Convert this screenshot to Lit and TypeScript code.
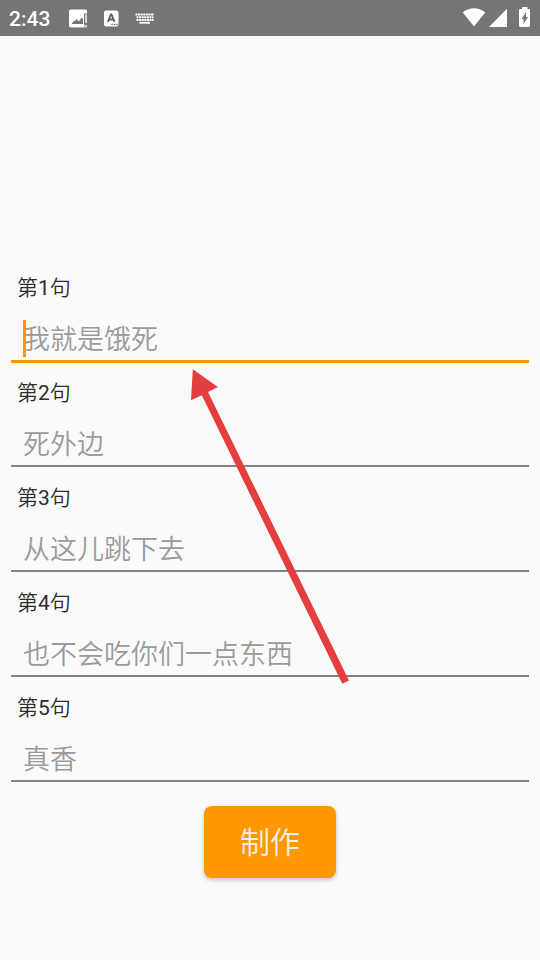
import { LitElement, html, css } from "lit";
import { customElement } from "lit/decorators.js";

@customElement("status-bar")
class StatusBar extends LitElement {
  static styles = css`
    :host {
      display: flex;
      align-items: center;
      height: 36px;
      padding: 0 9px;
      background: #757575;
      color: #fff;
      font: 500 21px/34px Roboto, "Noto Sans CJK SC", sans-serif;
    }
    time { padding-top: 2px; }
    svg { display: block; flex: none; }
    .group { display: flex; align-items: center; }
    .notices { gap: 15px; margin-left: 18px; flex: 1; }
    .system { gap: 3px; }
    .battery { margin-left: 9px; }
  `;

  render() {
    return html`
      <time>2:43</time>
      <div class="group notices">
        <svg width="20" height="20" viewBox="0 0 20 20" aria-hidden="true">
          <path fill="#fff" fill-rule="evenodd" d="M3 1.5H17.5Q19 1.5 19 3V5.5H16V16.5H16.5V19.5H3Q1 19.5 1 17.5V3.5Q1 1.5 3 1.5ZM3.5 16H15V11L13.5 9.5L11 13.5L8.5 11L7 13.5L6 12.5Z" />
          <path fill="#fff" fill-opacity="0.8" d="M17.2 6.5H19V15H17.2ZM17.2 17H19V19.5H17.2Z" />
        </svg>
        <svg width="17" height="18" viewBox="0 0 17 18" aria-hidden="true">
          <rect x="1" y="1.5" width="14.5" height="16" rx="2" fill="#fff" />
          <path d="M4.9 12.8L7.9 5.5H8.5L11.5 12.8M6.1 10.5H10.5" fill="none" stroke="#5f5f5f" stroke-width="1.8" />
          <path d="M8.3 15.3h1.4M10.8 15.3h1.4M13.3 15.3h1.4" stroke="#666" stroke-width="1.3" />
        </svg>
        <svg width="20" height="12" viewBox="0 0 20 12" aria-hidden="true">
          <path d="M0.5 2.4H19.2M1.5 5.2H18.5M1.5 8H18.5" stroke="#fff" stroke-width="2" stroke-dasharray="2 0.6" fill="none" />
          <path d="M4.5 10.8H15" stroke="#fff" stroke-width="1.8" />
        </svg>
      </div>
      <div class="group system">
        <svg width="24" height="22" viewBox="0 -1 24 22" aria-hidden="true">
          <path fill="#fff" d="M0.8 4.4Q12 -4 23.2 4.4L12 18.6Z" />
        </svg>
        <svg width="18" height="22" viewBox="0 -1 18 22" aria-hidden="true">
          <path fill="#fff" d="M18 0.8V19H0Z" />
        </svg>
        <svg class="battery" width="12" height="22" viewBox="0 -1 12 22" aria-hidden="true">
          <path fill="#fff" d="M3 -1H8.5V1H10Q11 1 11 2V17.5Q11 19 9.5 19H1.5Q0 19 0 17.5V2Q0 1 1 1H3Z" />
          <path fill="#757575" d="M7 4V9H9L4.5 16V11H2.5Z" />
        </svg>
      </div>
    `;
  }
}

@customElement("app-root")
class AppRoot extends LitElement {
  static styles = css`
    :host {
      display: block;
      position: relative;
      min-height: 100vh;
      background: #fafafa;
      font-family: Roboto, "Noto Sans CJK SC", sans-serif;
    }
    form {
      display: flex;
      flex-direction: column;
      padding: 222px 11px 80px;
    }
    .field {
      position: relative;
      display: flex;
      flex-direction: column;
      height: 105px;
    }
    label {
      padding: 15px 6px 0;
      color: #2c2c2c;
      font-weight: 350;
      font-size: 21px;
      line-height: 30px;
    }
    .number { font-weight: 400; }
    input {
      box-sizing: border-box;
      width: 100%;
      height: 44px;
      margin-top: 15px;
      padding: 2px 12px 0;
      border: 0;
      border-radius: 0;
      outline: 0;
      background: none;
      border-bottom: 2px solid #828282;
      color: #212121;
      caret-color: transparent;
      font: 350 27px/40px Roboto, "Noto Sans CJK SC", sans-serif;
    }
    input::placeholder { color: #9a9a9a; opacity: 1; }
    .active input {
      height: 45px;
      border-bottom: 3px solid #ff9800;
    }
    .caret {
      position: absolute;
      left: 12px;
      top: 62px;
      width: 3px;
      height: 37px;
      background: #ff9800;
    }
    button {
      align-self: center;
      width: 132px;
      height: 72px;
      margin-top: 23px;
      padding: 2px 0 0;
      border: 0;
      border-radius: 8px;
      background: #ff9800;
      box-shadow: 0 2px 4px rgba(0, 0, 0, 0.24);
      color: #eee;
      font: 350 30px/70px Roboto, "Noto Sans CJK SC", sans-serif;
    }
    .pointer {
      position: absolute;
      left: 180px;
      top: 360px;
      pointer-events: none;
    }
  `;

  private hints = ["我就是饿死", "死外边", "从这儿跳下去", "也不会吃你们一点东西", "真香"];

  render() {
    return html`
      <status-bar></status-bar>
      <form>
        ${this.hints.map(
          (hint, i) => html`
            <div class="field ${i === 0 ? "active" : ""}">
              <label for="line${i}">第<span class="number">${i + 1}</span>句</label>
              <input id="line${i}" type="text" placeholder=${hint} />
              ${i === 0 ? html`<span class="caret"></span>` : ""}
            </div>
          `
        )}
        <button type="button">制作</button>
      </form>
      <svg class="pointer" width="180" height="330" viewBox="0 0 180 330" aria-hidden="true">
        <path fill="#e53e3e" d="M12.8 9.3L37.8 27L28 32L169 320.5L162.3 323.7L21.8 35.2L11 40.2Z" />
      </svg>
    `;
  }
}
